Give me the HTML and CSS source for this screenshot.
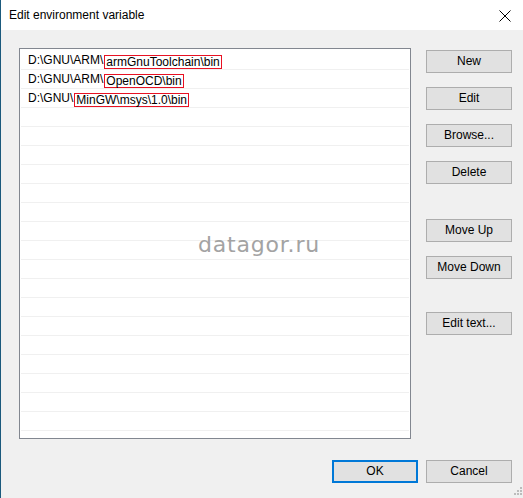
FILE: index.html
```html
<!DOCTYPE html>
<html lang="en">
<head>
<meta charset="utf-8">
<title>Edit environment variable</title>
<link rel="stylesheet" href="styles.css">
</head>
<body>
<div class="window">
  <header class="titlebar">
    <span class="title">Edit environment variable</span>
    <button class="close" aria-label="Close">
      <svg width="12" height="12" viewBox="0 0 12 12"><path d="M0.5 0.5 L11.5 11.5 M11.5 0.5 L0.5 11.5" stroke="#000" stroke-width="1" fill="none"/></svg>
    </button>
  </header>
  <main class="client">
    <section class="content">
      <div class="listbox">
        <ul class="rows">
          <li class="row">D:\GNU\ARM\<span class="mark">armGnuToolchain\bin</span></li>
          <li class="row">D:\GNU\ARM\<span class="mark">OpenOCD\bin</span></li>
          <li class="row">D:\GNU\<span class="mark">MinGW\msys\1.0\bin</span></li>
          <li class="row"></li><li class="row"></li><li class="row"></li><li class="row"></li>
          <li class="row"></li><li class="row"></li><li class="row"></li><li class="row"></li>
          <li class="row"></li><li class="row"></li><li class="row"></li><li class="row"></li>
          <li class="row"></li><li class="row"></li><li class="row"></li><li class="row"></li>
          <li class="row"></li><li class="row"></li>
        </ul>
        <span class="watermark">datagor.ru</span>
      </div>
      <div class="actions">
        <button class="btn">New</button>
        <button class="btn">Edit</button>
        <button class="btn">Browse...</button>
        <button class="btn">Delete</button>
        <button class="btn btn-up">Move Up</button>
        <button class="btn">Move Down</button>
        <button class="btn btn-text">Edit text...</button>
      </div>
    </section>
    <footer class="footer">
      <button class="btn btn-default">OK</button>
      <button class="btn">Cancel</button>
    </footer>
    <svg class="grip" width="10" height="10" viewBox="0 0 10 10">
      <rect x="8" y="0" width="2" height="2" fill="#bcbcbc"/>
      <rect x="5" y="3" width="2" height="2" fill="#bcbcbc"/>
      <rect x="8" y="3" width="2" height="2" fill="#bcbcbc"/>
      <rect x="2" y="6" width="2" height="2" fill="#bcbcbc"/>
      <rect x="5" y="6" width="2" height="2" fill="#bcbcbc"/>
      <rect x="8" y="6" width="2" height="2" fill="#bcbcbc"/>
    </svg>
  </main>
</div>
</body>
</html>
```

FILE: styles.css
```css
* { box-sizing: border-box; }

html, body {
  margin: 0;
  padding: 0;
  background: #f0f0f0;
}

body {
  font-family: "Liberation Sans", Arial, sans-serif;
  font-size: 12px;
  color: #000;
}

.window {
  width: 523px;
  height: 498px;
  border-left: 1px solid #1b5a7d;
  display: flex;
  flex-direction: column;
  overflow: hidden;
}

.titlebar {
  height: 30px;
  flex: 0 0 30px;
  background: #fff;
  display: flex;
  align-items: center;
  justify-content: space-between;
  padding-left: 8px;
}

.title {
  line-height: 30px;
  font-size: 12px;
}

.close {
  width: 46px;
  height: 30px;
  border: 0;
  background: transparent;
  padding: 0;
  display: flex;
  align-items: center;
  justify-content: center;
  margin-right: -5px;
}

.close svg { display: block; margin-top: 1px; }

.client {
  position: relative;
  flex: 1;
  background: #f0f0f0;
  display: flex;
  flex-direction: column;
}

.content {
  display: flex;
  gap: 15px;
  padding: 18px 11px 0 18px;
}

.listbox {
  position: relative;
  width: 392px;
  height: 391px;
  border: 1px solid #828790;
  background: #fff;
  overflow: hidden;
}

.rows {
  list-style: none;
  margin: 0;
  padding: 2px 1px 0 1px;
}

.row {
  height: 19px;
  border-bottom: 1px solid #f0f0f0;
  padding-left: 7px;
  line-height: 18px;
  white-space: nowrap;
}

.mark {
  display: inline-block;
  border: 1px solid #e81123;
  line-height: 12px;
  height: 14px;
  padding: 0 1px;
  margin-left: 1px;
  vertical-align: -2px;
}

.watermark {
  position: absolute;
  left: 178px;
  top: 183px;
  font-family: "DejaVu Sans", Verdana, sans-serif;
  font-size: 22px;
  letter-spacing: 0.8px;
  color: #a3a3a3;
}

.actions {
  display: flex;
  flex-direction: column;
  gap: 14px;
  padding-top: 2px;
}

.btn {
  width: 86px;
  height: 23px;
  border: 1px solid #adadad;
  background: #e1e1e1;
  font-family: "Liberation Sans", Arial, sans-serif;
  font-size: 12px;
  color: #000;
  padding: 0;
  line-height: 21px;
  text-align: center;
}

.btn-up { margin-top: 21px; }
.btn-text { margin-top: 19px; }

.btn-default {
  border: 2px solid #0078d7;
  line-height: 19px;
}

.footer {
  display: flex;
  justify-content: flex-end;
  gap: 8px;
  padding: 21px 11px 0 0;
}

.grip {
  position: absolute;
  right: 1px;
  bottom: 1px;
}
```
